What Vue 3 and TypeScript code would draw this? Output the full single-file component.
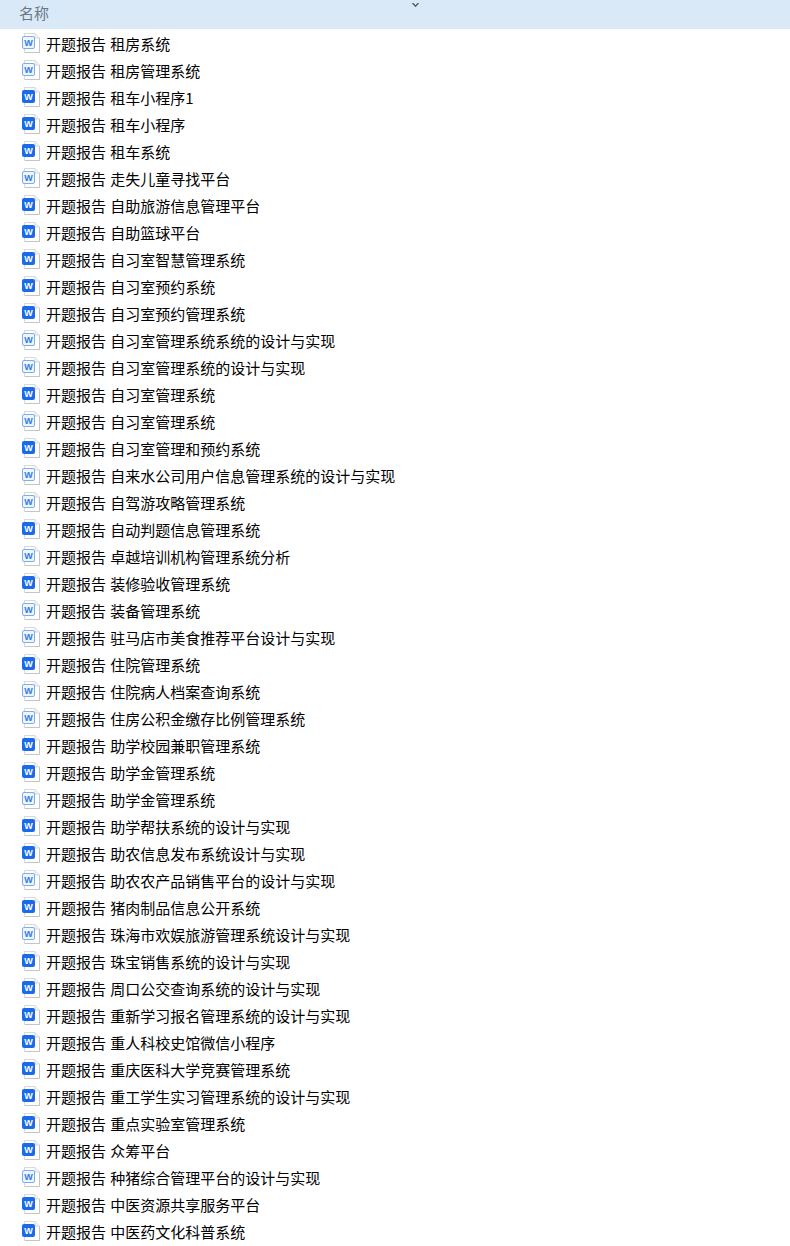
<template>
  <div class="page">
    <div class="caret">
      <svg width="7" height="4" viewBox="0 0 7 4"><path d="M0.5 0 L3.5 3.2 L6.5 0" fill="none" stroke="#4a5561" stroke-width="1.3" /></svg>
    </div>
    <div class="header"><span>名称</span></div>
    <ul class="list">
      <li v-for="(row, i) in rows" :key="i" class="row">
        <svg class="icon" width="20" height="22" viewBox="0 0 20 22">
          <path d="M3.5 1.5 H14 L18.5 6 V20.5 H3.5 Z" fill="#fff" stroke="#d8d8d8" />
          <path d="M18.5 6.5 V20.5 H4" fill="none" stroke="#c4c4c4" />
          <path d="M14 1.5 V6 H18.5" fill="#f2f2f2" stroke="#d8d8d8" />
          <rect v-if="row.dark" x="1" y="4" width="13" height="13" rx="2" fill="#1a6bea" />
          <rect v-else x="1.5" y="4.5" width="12" height="12" rx="1.5" fill="#eef5fe" stroke="#7aaef0" />
          <text x="7.5" y="13.8" text-anchor="middle" class="w" :class="{ 'w-dark': row.dark }">W</text>
        </svg>
        <span class="name">开题报告 {{ row.name }}</span>
      </li>
    </ul>
  </div>
</template>

<script setup lang="ts">
interface Row {
  name: string
  dark: boolean
}

// d = solid blue icon, l = pale icon
const data: [string, 'd' | 'l'][] = [
  ['租房系统', 'l'],
  ['租房管理系统', 'l'],
  ['租车小程序1', 'd'],
  ['租车小程序', 'd'],
  ['租车系统', 'd'],
  ['走失儿童寻找平台', 'l'],
  ['自助旅游信息管理平台', 'd'],
  ['自助篮球平台', 'd'],
  ['自习室智慧管理系统', 'd'],
  ['自习室预约系统', 'd'],
  ['自习室预约管理系统', 'd'],
  ['自习室管理系统系统的设计与实现', 'l'],
  ['自习室管理系统的设计与实现', 'l'],
  ['自习室管理系统', 'd'],
  ['自习室管理系统', 'l'],
  ['自习室管理和预约系统', 'd'],
  ['自来水公司用户信息管理系统的设计与实现', 'l'],
  ['自驾游攻略管理系统', 'l'],
  ['自动判题信息管理系统', 'd'],
  ['卓越培训机构管理系统分析', 'l'],
  ['装修验收管理系统', 'd'],
  ['装备管理系统', 'l'],
  ['驻马店市美食推荐平台设计与实现', 'l'],
  ['住院管理系统', 'd'],
  ['住院病人档案查询系统', 'l'],
  ['住房公积金缴存比例管理系统', 'l'],
  ['助学校园兼职管理系统', 'd'],
  ['助学金管理系统', 'd'],
  ['助学金管理系统', 'l'],
  ['助学帮扶系统的设计与实现', 'd'],
  ['助农信息发布系统设计与实现', 'd'],
  ['助农农产品销售平台的设计与实现', 'l'],
  ['猪肉制品信息公开系统', 'd'],
  ['珠海市欢娱旅游管理系统设计与实现', 'l'],
  ['珠宝销售系统的设计与实现', 'd'],
  ['周口公交查询系统的设计与实现', 'd'],
  ['重新学习报名管理系统的设计与实现', 'd'],
  ['重人科校史馆微信小程序', 'd'],
  ['重庆医科大学竞赛管理系统', 'd'],
  ['重工学生实习管理系统的设计与实现', 'd'],
  ['重点实验室管理系统', 'd'],
  ['众筹平台', 'd'],
  ['种猪综合管理平台的设计与实现', 'l'],
  ['中医资源共享服务平台', 'd'],
  ['中医药文化科普系统', 'd'],
]

const rows: Row[] = data.map(([name, kind]) => ({ name, dark: kind === 'd' }))
</script>

<style>
html, body {
  background: #fff;
}
</style>

<style scoped>
.page {
  position: relative;
  width: 790px;
  height: 1246px;
  overflow: hidden;
  background: #fff;
  font-family: "Noto Sans CJK SC", "Liberation Sans", sans-serif;
}

.caret {
  position: absolute;
  left: 412px;
  top: 0;
  height: 4px;
  line-height: 0;
}

.header {
  height: 24px;
  padding: 0 0 5px 19px;
  background: #d9e9f7;
  display: flex;
  align-items: center;
  font-size: 15px;
  color: #6b7785;
}

.list {
  list-style: none;
  margin: 0;
  padding: 1px 0 0 21px;
}

.row {
  height: 27px;
  display: flex;
  align-items: center;
  gap: 5px;
}

.icon {
  flex: none;
  margin: -3px 0 -2px;
}

.name {
  font-size: 15px;
  color: #000;
  white-space: nowrap;
  word-spacing: 1px;
}

.w {
  font-family: "Liberation Sans", sans-serif;
  font-size: 9px;
  font-weight: 700;
  fill: #2f7ae5;
}

.w-dark {
  fill: #fff;
}
</style>
